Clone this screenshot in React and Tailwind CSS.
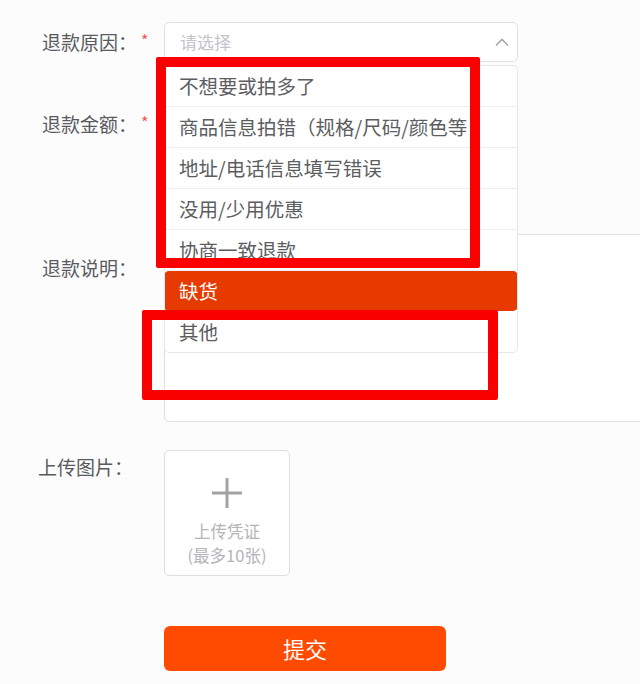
const reasons = [
    "不想要或拍多了",
    "商品信息拍错（规格/尺码/颜色等",
    "地址/电话信息填写错误",
    "没用/少用优惠",
    "协商一致退款",
];

const App = () => {
    return (
        <div
            className="relative w-[640px] h-[684px] overflow-hidden bg-[#fcfcfd] text-[#595a5e]"
            style={{ fontFamily: '"Noto Sans CJK SC", "Noto Sans", sans-serif' }}
        >
            {/* 退款原因 */}
            <div className="flex mt-[22px] h-[40px]">
                <div className="w-[164px] shrink-0 pl-[42px] flex items-center text-[19px]">
                    <span>退款原因：</span>
                    <span className="ml-[4px] text-[16px] text-[#f25555] -mt-[4px]">*</span>
                </div>
                <div className="relative w-[354px] h-[40px] border border-[#dcdfe6] rounded-[5px] bg-white flex items-center pl-[15px] pr-[6px]">
                    <span className="flex-1 text-[17px] text-[#c3c5ca]">请选择</span>
                    <svg width="16" height="10" viewBox="0 0 16 10" className="mr-[1px]">
                        <polyline points="2,8.5 8,2.5 14,8.5" fill="none" stroke="#a8a8ac" strokeWidth="1.6" />
                    </svg>
                </div>
            </div>

            {/* 退款金额 */}
            <div className="flex mt-[42px] h-[40px]">
                <div className="w-[164px] shrink-0 pl-[42px] flex items-center text-[19px]">
                    <span>退款金额：</span>
                    <span className="ml-[4px] text-[16px] text-[#f25555] -mt-[4px]">*</span>
                </div>
                <div className="w-[354px] h-[40px] border border-[#dcdfe6] rounded-[5px] bg-white"></div>
            </div>

            {/* 退款说明 */}
            <div className="flex mt-[90px]">
                <div className="w-[164px] shrink-0 pl-[42px] pt-[20px] text-[19px] leading-[28px]">退款说明：</div>
                <div className="w-[520px] shrink-0 h-[188px] border border-[#dcdfe6] rounded-[5px] bg-white"></div>
            </div>

            {/* 上传图片 */}
            <div className="flex mt-[28px]">
                <div className="w-[164px] shrink-0 pl-[38px] pt-[3px] text-[19px] leading-[28px]">上传图片：</div>
                <div className="w-[126px] h-[126px] border border-[#dcdfe6] rounded-[5px] bg-white flex flex-col items-center pt-[26px]">
                    <svg width="32" height="32" viewBox="0 0 32 32">
                        <path d="M16 1 V31 M1 16 H31" stroke="#a3a3a6" strokeWidth="3" fill="none" />
                    </svg>
                    <div className="mt-[10px] text-[16.5px] leading-[24px] text-[#b4b4b8]">上传凭证</div>
                    <div className="text-[16.5px] leading-[24px] text-[#b4b4b8]">(最多10张)</div>
                </div>
            </div>

            {/* 提交 */}
            <div className="flex mt-[50px] pl-[164px]">
                <button className="w-[282px] h-[45px] rounded-[6px] bg-[#ff4b00] text-white text-[22px]">
                    提交
                </button>
            </div>

            {/* dropdown list */}
            <div className="absolute left-[164px] top-[65px] w-[354px] h-[288px] border border-[#e4e7ed] rounded-[5px] bg-white overflow-hidden">
                {reasons.map((r) => (
                    <div
                        key={r}
                        className="h-[41px] border-b border-[#eceef2] flex items-center pl-[14px] text-[19.5px] text-[#5c5d61] whitespace-nowrap overflow-hidden"
                    >
                        {r}
                    </div>
                ))}
                <div className="h-[40px] -mx-px rounded-[5px] bg-[#e73a00] flex items-center pl-[15px] text-[19.5px] text-white">
                    缺货
                </div>
                <div className="h-[42px] flex items-center pl-[14px] text-[19.5px] text-[#5c5d61]">其他</div>
            </div>

            {/* red marks */}
            <div className="absolute left-[156px] top-[57px] w-[324px] h-[211px] border-[10px] border-[#fb0000] rounded-[2px]"></div>
            <div className="absolute left-[142px] top-[310px] w-[356px] h-[90px] border-[10px] border-[#fb0000] rounded-[2px]"></div>
        </div>
    );
};

export default App;
